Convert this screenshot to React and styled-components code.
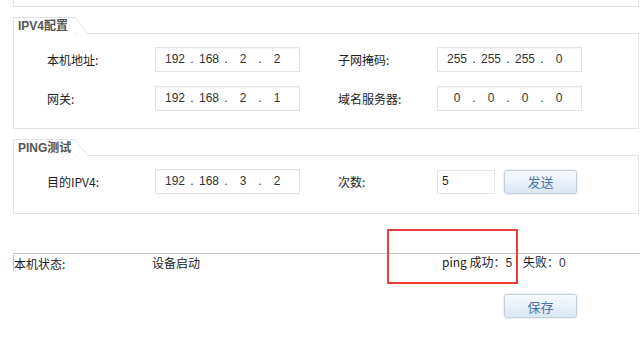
import React from 'react'
import styled, { createGlobalStyle } from 'styled-components'

const GlobalStyle = createGlobalStyle`
  html, body { margin: 0; padding: 0; background: #fff; }
  body {
    font-family: "Liberation Sans", "Noto Sans CJK SC", sans-serif;
    font-size: 12px;
    color: #222;
  }
`

const Page = styled.div`
  position: relative;
  width: 640px;
  height: 337px;
  overflow: hidden;
`

const TopStub = styled.div`
  box-sizing: border-box;
  margin-left: 13px;
  width: 626px;
  height: 7px;
  border: 1px solid #e3e3e3;
  border-top: none;
`

const Group = styled.div`
  margin-left: 13px;
  width: 626px;
  margin-top: ${p => p.$top}px;
`

const Tab = styled.div`
  position: relative;
  z-index: 1;
  box-sizing: border-box;
  width: 62px;
  height: 17px;
  margin-bottom: -1px;
  padding: 2px 0 0 4px;
  border-top: 1px solid #e3e3e3;
  border-left: 1px solid #e3e3e3;
  background: #fff;
  color: #555;
  font-weight: bold;
  font-size: 12px;
  line-height: 13px;
  white-space: nowrap;

  &::after {
    content: "";
    position: absolute;
    top: -1px;
    left: 49px;
    box-sizing: border-box;
    width: 12px;
    height: 17px;
    border-top: 1px solid #e3e3e3;
    border-right: 1px solid #e3e3e3;
    background: #fff;
    transform: skewX(39deg);
    transform-origin: top left;
    z-index: -1;
  }
`

const Box = styled.div`
  box-sizing: border-box;
  border: 1px solid #e3e3e3;
  padding: ${p => p.$pad};
  display: flex;
  flex-direction: column;
  gap: 14px;
`

const Row = styled.div`
  display: grid;
  grid-template-columns: 108px 145px 38px 99px auto;
  align-items: center;
  padding-left: 33px;
`

const Label = styled.span`
  font-family: "Noto Sans CJK SC", sans-serif;
  font-size: 12px;
  color: #222;
  white-space: nowrap;
`

const IpField = styled.div`
  box-sizing: border-box;
  width: 145px;
  height: 25px;
  border: 1px solid #e4e4e4;
  box-shadow: inset 0 1px 1px rgba(0, 0, 0, 0.04);
  background: #fff;
  display: flex;
  align-items: center;
  padding-left: 5px;
  font-family: "Liberation Sans", sans-serif;
  font-size: 12px;
  color: #333;
  padding-bottom: 2px;
`

const Seg = styled.span`
  width: 28px;
  text-align: center;
`

const Dot = styled.span`
  width: 6px;
  text-align: center;
`

const CountField = styled.div`
  box-sizing: border-box;
  width: 58px;
  height: 24px;
  border: 1px solid #e4e4e4;
  padding: 3px 0 0 4px;
  font-family: "Liberation Sans", sans-serif;
  font-size: 12px;
  color: #222;
`

const Button = styled.button`
  box-sizing: border-box;
  width: 73px;
  height: 24px;
  padding: 0;
  border: 1px solid #c6d0da;
  border-radius: 3px;
  background: linear-gradient(#f8fbfe, #dae7f4);
  box-shadow: 0 0 0 1px #eef2f6;
  color: #4a74b0;
  font-family: "Noto Sans CJK SC", sans-serif;
  font-size: 13px;
  cursor: pointer;
`

const CountCell = styled.div`
  display: flex;
  gap: 9px;
  align-items: center;
`

const Status = styled.div`
  margin-top: 39px;
  margin-left: 13px;
  display: grid;
  grid-template-columns: 139px 290px 81px auto;
  align-items: center;
  height: 15px;
  border-top: 1px solid #c4c4c4;
  font-family: "Noto Sans CJK SC", sans-serif;
  font-size: 12px;
  line-height: 15px;
  color: #222;
  white-space: nowrap;
`

const StatusLabel = styled.span`
  border-left: 1px solid #c4c4c4;
  padding-top: 1px;
`

const Count = styled.span`
  font-family: "Liberation Sans", sans-serif;
  color: #333;
`

const Footer = styled.div`
  display: flex;
  padding-left: 504px;
  margin-top: 25px;
`

const Highlight = styled.div`
  position: absolute;
  left: 387px;
  top: 229px;
  width: 131px;
  height: 55px;
  box-sizing: border-box;
  border: 2px solid #f03b3b;
  pointer-events: none;
`

function IpInput({ value }) {
  const parts = value.split('.')
  return (
    <IpField>
      {parts.map((p, i) => (
        <React.Fragment key={i}>
          <Seg>{p}</Seg>
          {i < parts.length - 1 && <Dot>.</Dot>}
        </React.Fragment>
      ))}
    </IpField>
  )
}

export default function App() {
  return (
    <Page>
      <GlobalStyle />
      <TopStub />

      <Group $top={10}>
        <Tab>IPV4配置</Tab>
        <Box $pad="13px 0 17px">
          <Row>
            <Label>本机地址:</Label>
            <IpInput value="192.168.2.2" />
            <span />
            <Label>子网掩码:</Label>
            <IpInput value="255.255.255.0" />
          </Row>
          <Row>
            <Label>网关:</Label>
            <IpInput value="192.168.2.1" />
            <span />
            <Label>域名服务器:</Label>
            <IpInput value="0.0.0.0" />
          </Row>
        </Box>
      </Group>

      <Group $top={10}>
        <Tab>PING测试</Tab>
        <Box $pad="13px 0 19px">
          <Row>
            <Label>目的IPV4:</Label>
            <IpInput value="192.168.3.2" />
            <span />
            <Label>次数:</Label>
            <CountCell>
              <CountField>5</CountField>
              <Button>发送</Button>
            </CountCell>
          </Row>
        </Box>
      </Group>

      <Status>
        <StatusLabel>本机状态:</StatusLabel>
        <span>设备启动</span>
        <span>ping 成功：<Count>5</Count></span>
        <span>失败：<Count>0</Count></span>
      </Status>

      <Footer>
        <Button>保存</Button>
      </Footer>

      <Highlight />
    </Page>
  )
}
